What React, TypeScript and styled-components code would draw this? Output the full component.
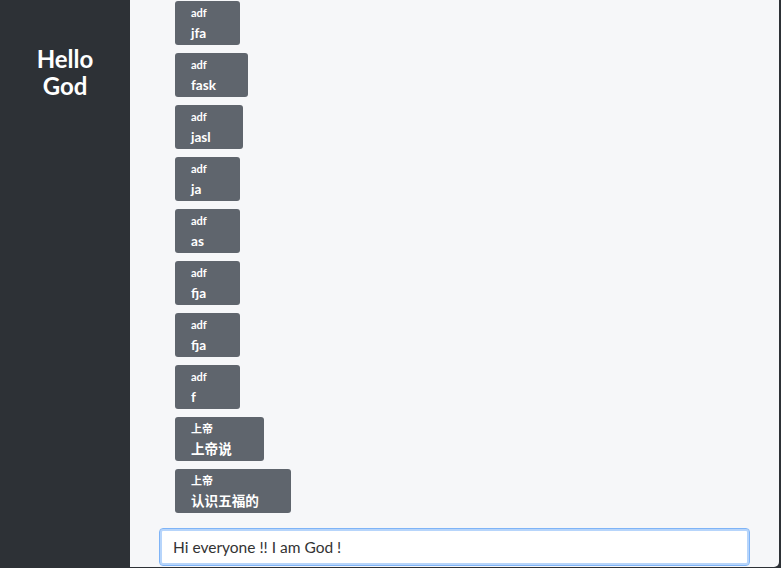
import React from "react";
import styled, { createGlobalStyle } from "styled-components";

const Global = createGlobalStyle`
  html, body { margin: 0; padding: 0; }
  body {
    background: #2d3136;
    font-family: Lato, "Noto Sans CJK SC", sans-serif;
    overflow: hidden;
  }
`;

const Layout = styled.div`
  display: grid;
  grid-template-columns: 130px 1fr;
  width: 781px;
  height: 568px;
`;

const Sidebar = styled.aside`
  background: #2d3136;
  display: flex;
  justify-content: center;
  padding-top: 45px;
  box-sizing: border-box;
`;

const Title = styled.h1`
  margin: 0;
  color: #ffffff;
  font-size: 24px;
  line-height: 27px;
  font-weight: 700;
  text-align: center;
  width: 60px;
`;

const Main = styled.main`
  background: #f6f7f9;
  height: 567px;
  margin-right: 2px;
  border-bottom-right-radius: 5px;
  display: flex;
  flex-direction: column;
  overflow: hidden;
`;

const MessageList = styled.div`
  flex: 1;
  display: flex;
  flex-direction: column;
  justify-content: flex-end;
  align-items: flex-start;
  gap: 8px;
  padding: 0 0 15px 45px;
  min-height: 0;
`;

const Bubble = styled.div`
  background: #5f656d;
  border-radius: 3px;
  min-width: 65px;
  height: 44px;
  box-sizing: border-box;
  padding: 4px 32px 0 16px;
  color: #ffffff;
  display: flex;
  flex-direction: column;
`;

const Sender = styled.span`
  font-size: 11px;
  line-height: 16px;
  font-weight: 700;
`;

const Text = styled.span`
  margin-top: 2px;
  font-size: 13.6px;
  line-height: 20px;
  font-weight: 700;
  white-space: nowrap;
`;

const InputRow = styled.div`
  padding: 0 29px 1px 29px;
`;

const Input = styled.input`
  display: block;
  width: 100%;
  height: 38px;
  box-sizing: border-box;
  border: 1px solid #7fb4f7;
  box-shadow: 0 0 0 2px #b7d5fb inset;
  border-radius: 4px;
  background: #ffffff;
  padding: 0 13px;
  font-family: Lato, "Noto Sans CJK SC", sans-serif;
  font-size: 15.5px;
  color: #333;
  outline: none;
`;

const messages = [
  { from: "adf", text: "jfa" },
  { from: "adf", text: "fask" },
  { from: "adf", text: "jasl" },
  { from: "adf", text: "ja" },
  { from: "adf", text: "as" },
  { from: "adf", text: "fja" },
  { from: "adf", text: "fja" },
  { from: "adf", text: "f" },
  { from: "上帝", text: "上帝说" },
  { from: "上帝", text: "认识五福的" },
];

export default function App() {
  return (
    <>
      <Global />
      <Layout>
        <Sidebar>
          <Title>Hello God</Title>
        </Sidebar>
        <Main>
          <MessageList>
            {messages.map((m, i) => (
              <Bubble key={i}>
                <Sender>{m.from}</Sender>
                <Text>{m.text}</Text>
              </Bubble>
            ))}
          </MessageList>
          <InputRow>
            <Input defaultValue="Hi everyone !! I am God !" />
          </InputRow>
        </Main>
      </Layout>
    </>
  );
}
